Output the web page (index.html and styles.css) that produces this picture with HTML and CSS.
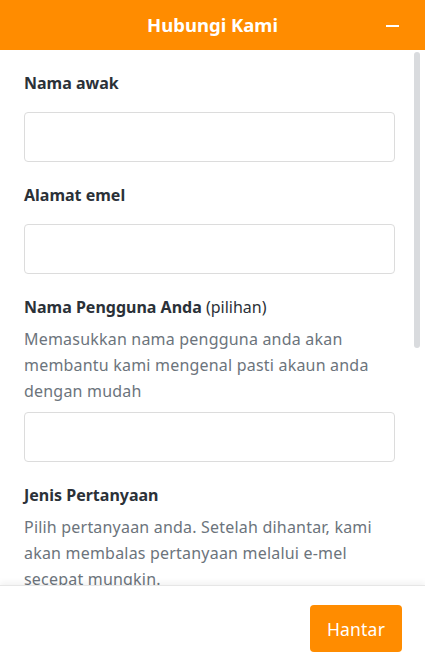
FILE: index.html
```html
<!DOCTYPE html>
<html lang="ms">
<head>
<meta charset="utf-8">
<title>Hubungi Kami</title>
<link rel="stylesheet" href="styles.css">
</head>
<body>
<div class="widget">
  <header class="header">
    <span class="spacer"></span>
    <h1 class="title">Hubungi Kami</h1>
    <button class="minimize" aria-label="Kecilkan"><span class="minus"></span></button>
  </header>
  <div class="scroll-wrap">
    <main class="body">
      <form class="form">
        <div class="field">
          <label class="label">Nama awak</label>
          <input class="input" type="text">
        </div>
        <div class="field">
          <label class="label">Alamat emel</label>
          <input class="input" type="email">
        </div>
        <div class="field">
          <label class="label">Nama Pengguna Anda <span class="optional">(pilihan)</span></label>
          <p class="desc">Memasukkan nama pengguna anda akan membantu kami mengenal pasti akaun anda dengan mudah</p>
          <input class="input" type="text">
        </div>
        <div class="field">
          <label class="label">Jenis Pertanyaan</label>
          <p class="desc">Pilih pertanyaan anda. Setelah dihantar, kami akan membalas pertanyaan melalui e-mel secepat mungkin.</p>
          <select class="input select"><option></option></select>
        </div>
        <div class="field">
          <label class="label">Mesej</label>
          <textarea class="input textarea"></textarea>
        </div>
      </form>
    </main>
    <div class="scroll-thumb"></div>
  </div>
  <footer class="footer">
    <button class="submit" type="button">Hantar</button>
  </footer>
</div>
</body>
</html>
```
FILE: styles.css
```css
* { box-sizing: border-box; }
html, body { margin: 0; padding: 0; }
body {
  font-family: "Noto Sans", "Open Sans", "Liberation Sans", sans-serif;
  background: #ffffff;
}
.widget {
  width: 425px;
  height: 666px;
  display: flex;
  flex-direction: column;
  overflow: hidden;
}
.header {
  height: 50px;
  flex: none;
  background: #ff8c00;
  display: grid;
  grid-template-columns: 1fr auto 1fr;
  align-items: center;
}
.title {
  margin: 0;
  color: #ffffff;
  font-size: 18.5px;
  font-weight: 700;
  line-height: 24px;
}
.minimize {
  justify-self: end;
  margin-right: 26px;
  width: 14px;
  height: 14px;
  padding: 0;
  border: 0;
  background: transparent;
  display: flex;
  align-items: center;
  justify-content: center;
}
.minus {
  display: block;
  width: 13px;
  height: 2px;
  background: #ffffff;
  margin-top: 2px;
}
.scroll-wrap {
  flex: 1;
  min-height: 0;
  position: relative;
}
.body {
  height: 100%;
  overflow: hidden;
  padding: 21px 30px 36px 24px;
}
.scroll-thumb {
  position: absolute;
  top: 2px;
  right: 5px;
  width: 6px;
  height: 296px;
  border-radius: 3px;
  background: #d9dbde;
}
.form {
  display: flex;
  flex-direction: column;
  gap: 21px;
}
.field {
  display: flex;
  flex-direction: column;
}
.label {
  font-size: 16px;
  line-height: 24px;
  font-weight: 700;
  color: #2b3138;
  margin-bottom: 17px;
}
.optional { font-weight: 400; }
.field .desc ~ .input { margin-top: 8px; }
.label:has(+ .desc) { margin-bottom: 7px; }
.desc {
  margin: 0;
  font-size: 16px;
  line-height: 26px;
  letter-spacing: 0.2px;
  color: #6c747c;
}
.input {
  display: block;
  width: 100%;
  height: 50px;
  border: 1px solid #dcdcdc;
  border-radius: 4px;
  background: #ffffff;
  font: inherit;
  padding: 0 12px;
}
.select { appearance: none; }
.textarea { height: 150px; resize: none; }
.footer {
  flex: none;
  height: 81px;
  border-top: 1px solid #e6e6e6;
  box-shadow: 0 -3px 6px rgba(0, 0, 0, 0.05);
  background: #ffffff;
  display: flex;
  justify-content: flex-end;
  align-items: flex-start;
  padding: 19px 23px 0 0;
  position: relative;
}
.submit {
  width: 92px;
  height: 47px;
  padding: 0;
  border: 0;
  border-radius: 4px;
  background: #ff8c00;
  color: #ffffff;
  font-family: inherit;
  font-size: 17.5px;
  letter-spacing: 0.2px;
  font-weight: 400;
}
```
